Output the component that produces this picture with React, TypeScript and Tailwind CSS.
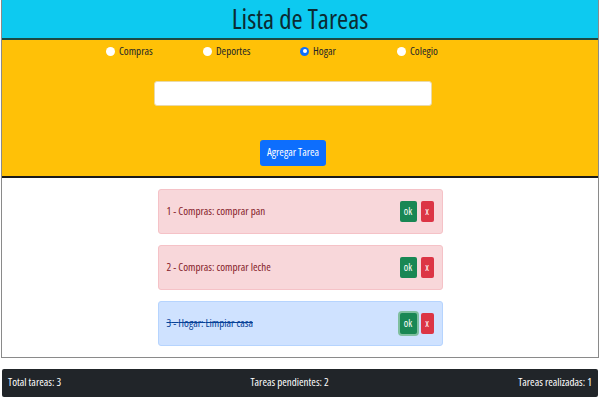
import React from "react";

type Tarea = {
	id: number;
	categoria: string;
	texto: string;
	hecha: boolean;
};

const tareas: Tarea[] = [
	{ id: 1, categoria: "Compras", texto: "comprar pan", hecha: false },
	{ id: 2, categoria: "Compras", texto: "comprar leche", hecha: false },
	{ id: 3, categoria: "Hogar", texto: "Limpiar casa", hecha: true },
];

const categorias = ["Compras", "Deportes", "Hogar", "Colegio"];

const font = "font-['Open_Sans','Roboto',sans-serif] [font-stretch:78%] font-[380]";

export default function App() {
	return (
		<div className={`w-[600px] h-[400px] bg-white ${font}`}>
			<div className="ml-[1px] mr-[1px] border-l border-r border-b border-[#8a8a8a]">
				{/* Header */}
				<div className="h-[40px] bg-[#0dcaf0] border-b-2 border-[#1c4a44] flex items-center justify-center">
					<h1 className="text-[27px] font-normal leading-none text-[#0b2b33] mt-[-1px]">
						Lista de Tareas
					</h1>
				</div>

				{/* Form */}
				<div className="h-[138px] bg-[#ffc107] border-b-2 border-[#1a1a1a] flex flex-col items-center pr-[14px]">
					<div className="flex w-[390px] mt-[3px] ml-[16px]">
						{categorias.map((c) => (
							<label
								key={c}
								className="w-[97px] flex items-center gap-[4px] text-[11px] text-[#212529]"
							>
								{c === "Hogar" ? (
									<span className="w-[9px] h-[9px] rounded-full bg-[#0d6efd] flex items-center justify-center">
										<span className="w-[4px] h-[4px] rounded-full bg-white" />
									</span>
								) : (
									<span className="w-[9px] h-[9px] rounded-full bg-white" />
								)}
								{c}
							</label>
						))}
					</div>
					<div className="w-[278px] h-[25px] bg-white rounded-[3px] border border-[#e9d9a8] mt-[21px]" />
					<button className="mt-[34px] h-[26px] px-[7px] bg-[#0d6efd] text-white text-[11px] rounded-[3px]">
						Agregar Tarea
					</button>
				</div>

				{/* Lista */}
				<div className="h-[179px] flex flex-col items-center pt-[11px] gap-[11px]">
					{tareas.map((t) => (
						<div
							key={t.id}
							className={`w-[285px] h-[45px] rounded-[3px] border flex items-center justify-between pl-[8px] pr-[8px] ${
								t.hecha
									? "bg-[#cfe2ff] border-[#b6d4fe] text-[#084298]"
									: "bg-[#f8d7da] border-[#f5c2c7] text-[#842029]"
							}`}
						>
							<span className={`text-[11px] ${t.hecha ? "line-through" : ""}`}>
								{t.id} - {t.categoria}: {t.texto}
							</span>
							<div className="flex gap-[4px]">
								<button
									className={`w-[17px] h-[21px] rounded-[2px] bg-[#198754] text-white text-[10px] ${
										t.hecha ? "bg-[#146c43] ring-2 ring-[#7fbf9f]" : ""
									}`}
								>
									ok
								</button>
								<button className="w-[13px] h-[21px] rounded-[2px] bg-[#dc3545] text-white text-[10px]">
									x
								</button>
							</div>
						</div>
					))}
				</div>
			</div>

			{/* Footer */}
			<div className="mt-[11px] mx-[2px] h-[28px] bg-[#212529] rounded-[2px] flex justify-between px-[6px] pt-[5px] text-white text-[11px]">
				<span>Total tareas: 3</span>
				<span>Tareas pendientes: 2</span>
				<span>Tareas realizadas: 1</span>
			</div>
		</div>
	);
}
